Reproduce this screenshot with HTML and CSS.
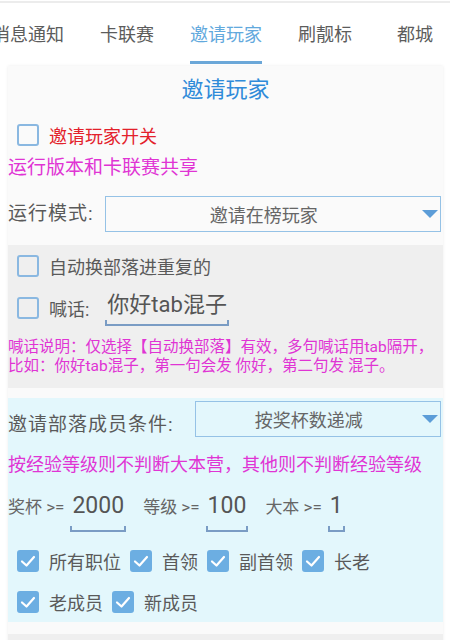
FILE: index.html
```html
<!DOCTYPE html>
<html lang="zh-CN">

<head>
    <meta charset="UTF-8">
    <meta name="viewport" content="width=device-width, initial-scale=1.0">
    <title>邀请玩家</title>
    <link rel="stylesheet" href="styles.css">
</head>

<body>
    <!-- Tab bar -->
    <nav class="tabs">
        <div class="tab-strip">
            <span class="tab">消息通知</span>
            <span class="tab">卡联赛</span>
            <span class="tab active">邀请玩家</span>
            <span class="tab">刷靓标</span>
            <span class="tab">都城</span>
        </div>
    </nav>

    <main class="panel">
        <h2 class="title">邀请玩家</h2>

        <label class="check-row">
            <span class="box"></span>
            <span class="red">邀请玩家开关</span>
        </label>
        <p class="note">运行版本和卡联赛共享</p>

        <div class="field">
            <span class="field-label">运行模式:</span>
            <div class="select">
                <span class="select-text">邀请在榜玩家</span>
                <span class="arrow"></span>
            </div>
        </div>

        <!-- Tribe switching / shout -->
        <section class="group gray">
            <label class="check-row">
                <span class="box"></span>
                <span>自动换部落进重复的</span>
            </label>
            <label class="check-row">
                <span class="box"></span>
                <span>喊话:</span>
                <span class="input">你好tab混子</span>
            </label>
            <p class="desc">喊话说明：仅选择【自动换部落】有效，多句喊话用tab隔开，<br>比如：你好tab混子，第一句会发 你好，第二句发 混子。</p>
        </section>

        <!-- Member conditions -->
        <section class="group cyan">
            <div class="field cond">
                <span class="field-label">邀请部落成员条件:</span>
                <div class="select">
                    <span class="select-text">按奖杯数递减</span>
                    <span class="arrow"></span>
                </div>
            </div>
            <p class="tip">按经验等级则不判断大本营，其他则不判断经验等级</p>

            <div class="limits">
                <span>奖杯 &gt;=</span>
                <span class="num">2000</span>
                <span>等级 &gt;=</span>
                <span class="num">100</span>
                <span>大本 &gt;=</span>
                <span class="num">1</span>
            </div>

            <div class="checks">
                <label class="check"><span class="box on"><svg viewBox="0 0 22 22"><polyline points="5,11.5 9.5,15.5 17,7" /></svg></span>所有职位</label>
                <label class="check"><span class="box on"><svg viewBox="0 0 22 22"><polyline points="5,11.5 9.5,15.5 17,7" /></svg></span>首领</label>
                <label class="check"><span class="box on"><svg viewBox="0 0 22 22"><polyline points="5,11.5 9.5,15.5 17,7" /></svg></span>副首领</label>
                <label class="check"><span class="box on"><svg viewBox="0 0 22 22"><polyline points="5,11.5 9.5,15.5 17,7" /></svg></span>长老</label>
                <label class="check"><span class="box on"><svg viewBox="0 0 22 22"><polyline points="5,11.5 9.5,15.5 17,7" /></svg></span>老成员</label>
                <label class="check"><span class="box on"><svg viewBox="0 0 22 22"><polyline points="5,11.5 9.5,15.5 17,7" /></svg></span>新成员</label>
            </div>
        </section>

        <section class="group tail"></section>
    </main>
</body>

</html>
```

FILE: styles.css
```css
* {
    box-sizing: border-box;
}

body {
    margin: 0;
    font-family: Roboto, "Noto Sans CJK SC", sans-serif;
    color: #5a5a5a;
    background-color: #ffffff;
    overflow: hidden;
}

/* Tabs */
.tabs {
    margin-top: 1px;
    border-top: 2px solid #ececec;
    overflow: hidden;
    white-space: nowrap;
}

.tab-strip {
    display: flex;
    margin-left: -26px;
}

.tab {
    display: flex;
    flex-direction: column;
    align-items: center;
    flex-shrink: 0;
    min-width: 90px;
    padding: 20px 18px 0;
    font-size: 18px;
    line-height: 24px;
    color: #5c5c5c;
}

.tab::after {
    content: "";
    display: block;
    align-self: stretch;
    height: 3px;
    margin-top: 14px;
}

.tab.active {
    color: #62a9dd;
}

.tab.active::after {
    background-color: #6ba7d8;
}

/* Panel */
.panel {
    margin: 2px 7px 0 8px;
    background-color: #fafafa;
    box-shadow: 0 0 3px rgba(0, 0, 0, 0.08);
}

.title {
    margin: 0;
    text-align: center;
    font-size: 22px;
    font-weight: normal;
    line-height: 48px;
    color: #2f8bd9;
}

.check-row {
    display: flex;
    align-items: center;
    gap: 10px;
    height: 42px;
    padding-left: 9px;
    font-size: 18px;
}

.box {
    display: flex;
    width: 22px;
    height: 22px;
    border: 2px solid #8ab8e1;
    border-radius: 3px;
    flex-shrink: 0;
}

.box.on {
    background-color: #6caee2;
    border-color: #6caee2;
}

.box svg {
    margin: -2px;
    width: 22px;
    height: 22px;
}

.box polyline {
    fill: none;
    stroke: #ffffff;
    stroke-width: 2.2;
    stroke-linecap: round;
    stroke-linejoin: round;
}

.red {
    color: #e3212b;
}

.note {
    margin: 0;
    font-size: 19px;
    line-height: 24px;
    color: #e034d4;
}

/* Select boxes */
.field {
    display: flex;
    align-items: center;
    margin-top: 16px;
    padding-right: 2px;
}

.field-label {
    font-size: 19px;
    line-height: 24px;
    letter-spacing: 1px;
}

.select {
    flex: 1;
    display: flex;
    align-items: center;
    height: 36px;
    margin-left: 11px;
    padding-right: 2px;
    border: 1.5px solid #95c2e6;
    font-size: 18px;
    color: #666666;
}

.select-text {
    flex: 1;
    text-align: center;
}

.arrow {
    border-left: 8px solid transparent;
    border-right: 8px solid transparent;
    border-top: 8px solid #5c9dd8;
}

/* Groups */
.group.gray {
    margin-top: 13px;
    padding-bottom: 12px;
    background-color: #efefef;
}

.input {
    display: flex;
    flex-direction: column;
    margin-left: 6px;
    padding: 0 2px;
    font-size: 22px;
    line-height: 28px;
    color: #555555;
}

.input::after,
.num::after {
    content: "";
    display: block;
    height: 4px;
    margin: 1px -2px 0;
    border: 2px solid #7a9cc4;
    border-top: 0;
}

.desc {
    margin: 9px 0 0;
    font-size: 15.5px;
    line-height: 19px;
    color: #e034d4;
}

.group.cyan {
    margin-top: 10px;
    padding-top: 3px;
    background-color: #e3f7fc;
}

.field.cond {
    margin-top: 0;
    align-items: flex-end;
}

.field.cond .select {
    margin-left: 21px;
}

.tip {
    margin: 16px 0 0;
    font-size: 18px;
    line-height: 24px;
    color: #e034d4;
}

.limits {
    display: flex;
    align-items: baseline;
    margin-top: 14px;
    font-size: 17px;
    color: #666666;
}

.num {
    display: inline-flex;
    flex-direction: column;
    margin: 0 17px 0 6px;
    padding: 0 2px;
    font-size: 23px;
    line-height: 30px;
    color: #555555;
}

.num::after {
    margin-top: 5px;
}

.checks {
    display: flex;
    flex-wrap: wrap;
    margin-top: 8px;
    padding-left: 9px;
}

.check {
    display: flex;
    align-items: center;
    gap: 10px;
    height: 41px;
    margin-right: 9px;
    font-size: 18px;
}

.group.tail {
    margin-top: 12px;
    height: 40px;
    background-color: #efefef;
}
```
